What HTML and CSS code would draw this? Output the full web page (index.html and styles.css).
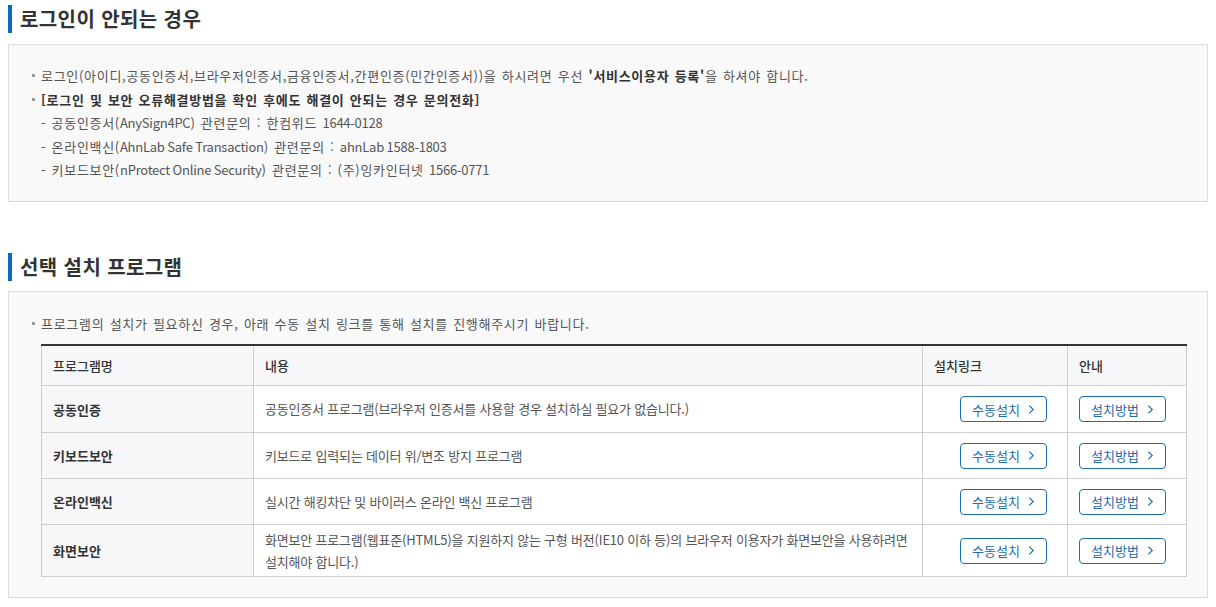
FILE: index.html
```html
<!DOCTYPE html>
<html lang="ko">
<head>
<meta charset="utf-8">
<title>로그인이 안되는 경우</title>
<link rel="stylesheet" href="styles.css">
</head>
<body>
<div class="page">
  <h2 class="sec-title">로그인이 안되는 경우</h2>
  <div class="box box-login">
    <ul class="bullets">
      <li>로그인(아이디,공동인증서,브라우저인증서,금융인증서,간편인증(민간인증서))을 하시려면 우선 <b>'서비스이용자 등록'</b>을 하셔야 합니다.</li>
      <li><b>[로그인 및 보안 오류해결방법을 확인 후에도 해결이 안되는 경우 문의전화]</b></li>
    </ul>
    <ul class="dashes">
      <li>- 공동인증서(<span class="en" lang="en">AnySign4PC</span>) 관련문의 : 한컴위드 <span class="en" lang="en">1644-0128</span></li>
      <li>- 온라인백신(<span class="en" lang="en">AhnLab Safe Transaction</span>) 관련문의 : <span class="en" lang="en">ahnLab 1588-1803</span></li>
      <li>- 키보드보안(<span class="en" lang="en">nProtect Online Security</span>) 관련문의 : (주)잉카인터넷 <span class="en" lang="en">1566-0771</span></li>
    </ul>
  </div>

  <h2 class="sec-title sec-second">선택 설치 프로그램</h2>
  <div class="box box-prog">
    <ul class="bullets">
      <li>프로그램의 설치가 필요하신 경우, 아래 수동 설치 링크를 통해 설치를 진행해주시기 바랍니다.</li>
    </ul>
    <table class="prog">
      <colgroup>
        <col class="c1"><col class="c2"><col class="c3"><col class="c4">
      </colgroup>
      <thead>
        <tr><th>프로그램명</th><th>내용</th><th>설치링크</th><th>안내</th></tr>
      </thead>
      <tbody>
        <tr class="first">
          <th>공동인증</th>
          <td>공동인증서 프로그램(브라우저 인증서를 사용할 경우 설치하실 필요가 없습니다.)</td>
          <td class="btn-cell"><a class="btn" href="#">수동설치<svg viewBox="0 0 8 12"><path d="M1.5 1.5 6 6l-4.5 4.5"/></svg></a></td>
          <td class="btn-cell"><a class="btn" href="#">설치방법<svg viewBox="0 0 8 12"><path d="M1.5 1.5 6 6l-4.5 4.5"/></svg></a></td>
        </tr>
        <tr>
          <th>키보드보안</th>
          <td>키보드로 입력되는 데이터 위/변조 방지 프로그램</td>
          <td class="btn-cell"><a class="btn" href="#">수동설치<svg viewBox="0 0 8 12"><path d="M1.5 1.5 6 6l-4.5 4.5"/></svg></a></td>
          <td class="btn-cell"><a class="btn" href="#">설치방법<svg viewBox="0 0 8 12"><path d="M1.5 1.5 6 6l-4.5 4.5"/></svg></a></td>
        </tr>
        <tr>
          <th>온라인백신</th>
          <td>실시간 해킹차단 및 바이러스 온라인 백신 프로그램</td>
          <td class="btn-cell"><a class="btn" href="#">수동설치<svg viewBox="0 0 8 12"><path d="M1.5 1.5 6 6l-4.5 4.5"/></svg></a></td>
          <td class="btn-cell"><a class="btn" href="#">설치방법<svg viewBox="0 0 8 12"><path d="M1.5 1.5 6 6l-4.5 4.5"/></svg></a></td>
        </tr>
        <tr class="tall">
          <th>화면보안</th>
          <td>화면보안 프로그램(웹표준(HTML5)을 지원하지 않는 구형 버전(IE10 이하 등)의 브라우저 이용자가 화면보안을 사용하려면 설치해야 합니다.)</td>
          <td class="btn-cell"><a class="btn" href="#">수동설치<svg viewBox="0 0 8 12"><path d="M1.5 1.5 6 6l-4.5 4.5"/></svg></a></td>
          <td class="btn-cell"><a class="btn" href="#">설치방법<svg viewBox="0 0 8 12"><path d="M1.5 1.5 6 6l-4.5 4.5"/></svg></a></td>
        </tr>
      </tbody>
    </table>
  </div>
</div>
</body>
</html>
```

FILE: styles.css
```css
html, body {
  margin: 0;
  padding: 0;
  background: #fff;
}
body {
  font-family: "Noto Sans CJK KR", "Noto Sans", sans-serif;
  font-size: 13px;
  color: #555;
}
.page {
  padding: 5px 8px 0 8px;
}
.sec-title {
  margin: 0 0 11px 0;
  height: 28px;
  line-height: 28px;
  border-left: 4px solid #0a6cb8;
  padding-left: 8px;
  font-size: 20px;
  font-weight: 700;
  color: #333;
  letter-spacing: 0.4px;
}
.sec-second {
  margin-top: 51px;
  margin-bottom: 10px;
}
.box {
  border: 1px solid #dcdcdc;
  background: #f9f9f9;
}
.box-login {
  padding: 19px 20px 19px 23px;
}
.box-prog {
  padding: 20px 20px 20px 23px;
}
ul {
  list-style: none;
  margin: 0;
  padding: 0;
}
.bullets li,
.dashes li {
  padding-left: 9px;
  line-height: 23.5px;
  letter-spacing: 0.7px;
  word-spacing: 1px;
}
.bullets li {
  position: relative;
}
.bullets li::before {
  content: "";
  position: absolute;
  left: 0;
  top: 10px;
  width: 3px;
  height: 3px;
  background: #999;
}
.bullets b {
  color: #333;
  font-weight: 700;
}
.en {
  letter-spacing: -0.25px;
  word-spacing: 0;
}
.prog {
  margin: 9px 0 0 9px;
  width: 1145px;
  border-collapse: collapse;
  border-top: 2px solid #333;
  table-layout: fixed;
  background: #fff;
}
.c1 { width: 212px; }
.c2 { width: 669px; }
.c3 { width: 145px; }
.c4 { width: 119px; }
.prog th, .prog td {
  border: 1px solid #cfcfcf;
  padding: 0 11px;
  text-align: left;
  vertical-align: middle;
  font-size: 13px;
}
.prog thead th {
  height: 39px;
  border-top: 0;
  background: #f7f7f9;
  color: #333;
  font-weight: 500;
}
.prog tbody th {
  background: #f7f7f9;
  color: #333;
  font-weight: 700;
  height: 45px;
}
.prog tbody td {
  color: #555;
  height: 45px;
  line-height: 22px;
  letter-spacing: -0.2px;
}
.prog tbody tr.first th,
.prog tbody tr.first td {
  height: 46px;
}
.prog tbody tr.tall th,
.prog tbody tr.tall td {
  height: 51px;
}
.prog tbody td.btn-cell {
  text-align: right;
  padding-right: 20px;
  line-height: 0;
  letter-spacing: 0;
}
.btn {
  display: inline-flex;
  align-items: center;
  justify-content: center;
  gap: 8px;
  box-sizing: border-box;
  width: 87px;
  height: 26px;
  border: 1px solid #1c6cb0;
  border-radius: 4px;
  color: #1c6cb0;
  text-decoration: none;
  font-size: 13px;
  line-height: 1;
  background: #fff;
}
.btn svg {
  width: 7px;
  height: 11px;
  fill: none;
  stroke: #1c6cb0;
  stroke-width: 1.3;
}
```
